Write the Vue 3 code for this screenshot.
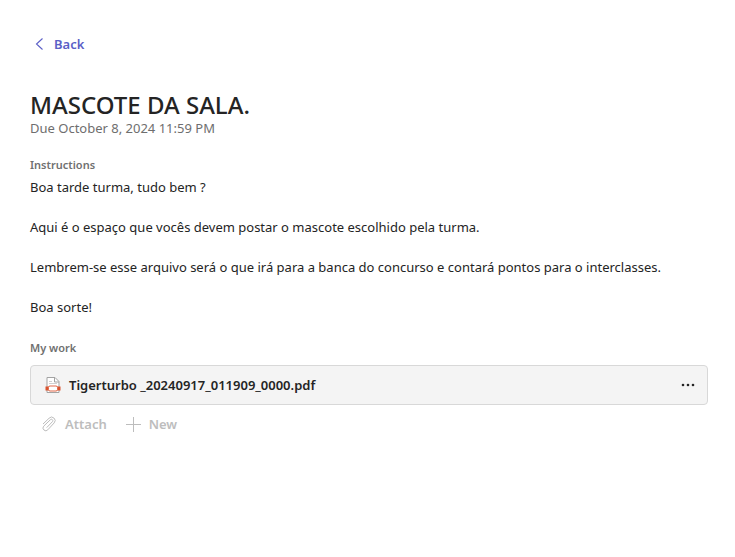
<script setup>
const paragraphs = [
  'Boa tarde turma, tudo bem ?',
  'Aqui é o espaço que vocês devem postar o mascote escolhido pela turma.',
  'Lembrem-se esse arquivo será o que irá para a banca do concurso e contará pontos para o interclasses.',
  'Boa sorte!'
]
const files = [{ name: 'Tigerturbo _20240917_011909_0000.pdf' }]
</script>

<template>
  <main class="page">
    <a class="back" href="#">
      <svg width="18" height="18" viewBox="0 0 18 18" fill="none" stroke="currentColor" stroke-width="1.1">
        <path d="M12.500 3.500 6.500 9l6 5.500" />
      </svg>
      Back
    </a>
    <header>
      <h1>MASCOTE DA SALA.</h1>
      <p class="due">Due October 8, 2024 11:59 PM</p>
    </header>
    <section class="instructions">
      <h2>Instructions</h2>
      <p v-for="p in paragraphs" :key="p">{{ p }}</p>
    </section>
    <section class="work">
      <h2>My work</h2>
      <ul>
        <li v-for="f in files" :key="f.name">
          <svg width="16" height="18" viewBox="0 0 16 18">
            <path d="M2 1.500h8l4 4v11H2z" fill="#fff" stroke="#a3a3a3" />
            <path d="M9.500 1.500v4.500H14" fill="none" stroke="#a3a3a3" />
            <path d="M4 5.500h3M4 7.500h8" stroke="#d0d0d0" />
            <path d="M.5 10.500h4v4h-4zM11.500 10.500h4v4h-4z" fill="#d9532f" />
            <rect x="3.500" y="10" width="9" height="5" rx="1.500" fill="#fff" stroke="#e0694a" />
          </svg>
          <span class="name">{{ f.name }}</span>
          <button class="more" aria-label="More options">
            <svg width="16" height="16" viewBox="0 0 16 16" fill="currentColor">
              <circle cx="3" cy="8" r="1.300" /><circle cx="8" cy="8" r="1.300" /><circle cx="13" cy="8" r="1.300" />
            </svg>
          </button>
        </li>
      </ul>
      <div class="actions">
        <button disabled>
          <svg width="16" height="16" viewBox="0 0 16 16" fill="none" stroke="currentColor">
            <path d="M2 8 8 2.300a3.200 3.200 0 0 1 5.200 4.600L6.800 13.800a2.700 2.700 0 0 1-4.100-3.600l6.600-6.400a1.300 1.300 0 0 1 2.200 1.800l-5.800 6" />
          </svg>
          Attach
        </button>
        <button disabled>
          <svg width="16" height="16" viewBox="0 0 16 16" fill="none" stroke="currentColor">
            <path d="M8.500 1v15M1 8.500h15" />
          </svg>
          New
        </button>
      </div>
    </section>
  </main>
</template>

<style>
body { margin: 0; background: #fff; }
</style>

<style scoped>
.page {
  padding: 34px 27px 34px 30px;
  font: 13px/20px "Noto Sans", "Open Sans", sans-serif;
  color: #242424;
}
h1, h2, p, ul { margin: 0; padding: 0; }
.back { display: flex; width: fit-content; align-items: center; gap: 6px; color: #5b5fc7; font-weight: 600; text-decoration: none; }
header { margin-top: 38px; }
h1 { font-size: 24px; line-height: 26px; font-weight: 500; }
.due { color: #6e6e6e; }
h2 { font-size: 11px; line-height: 16px; font-weight: 600; color: #707070; }
.instructions { margin-top: 19px; }
.instructions h2 { margin-bottom: 4px; }
.instructions p + p { margin-top: 20px; }
.work { margin-top: 23px; }
.work h2 { margin-bottom: 9px; }
ul { list-style: none; }
li { display: flex; align-items: center; height: 38px; padding: 0 11px 0 14px; border: 1px solid #d8d8d8; border-radius: 4px; background: #f4f4f4; }
.name { flex: 1; margin-left: 8px; font-weight: 600; }
button { display: inline-flex; align-items: center; padding: 0; border: 0; background: none; font: inherit; color: inherit; }
.actions { display: flex; gap: 18px; padding: 9px 11px; color: #bdbdbd; }
.actions button { gap: 8px; font-weight: 600; }
</style>
